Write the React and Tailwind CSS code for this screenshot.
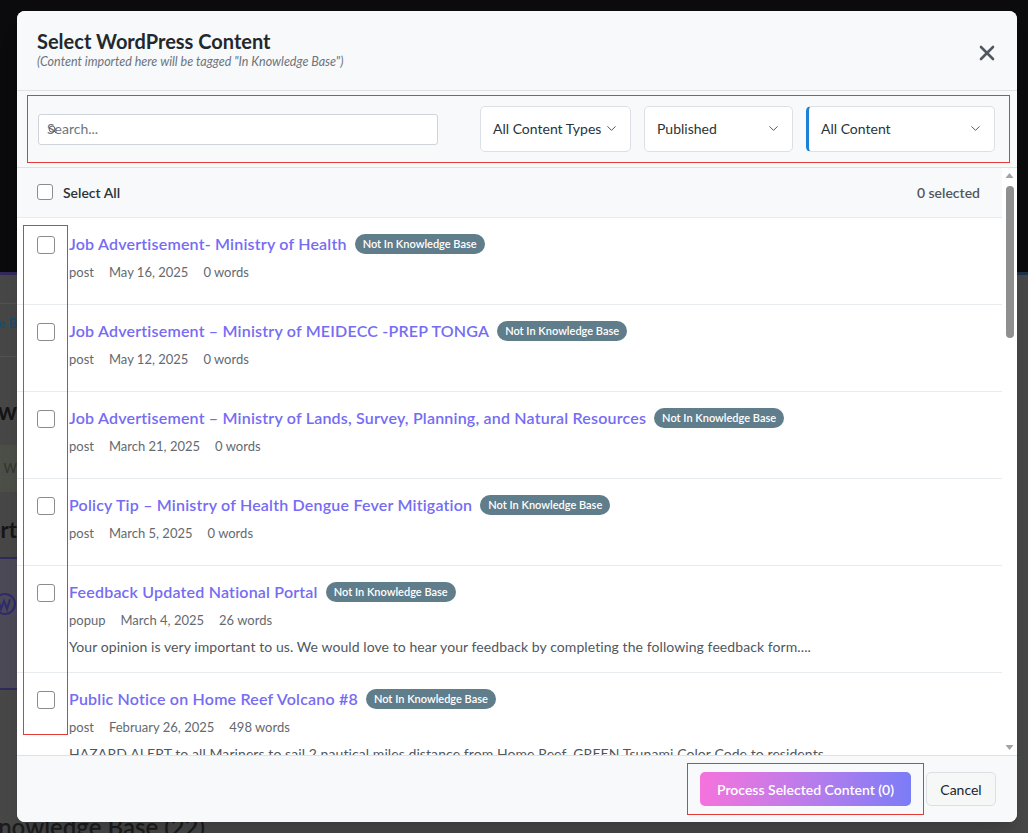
import { X, ChevronDown, Search } from "lucide-react";

const items = [
  { title: "Job Advertisement- Ministry of Health", type: "post", date: "May 16, 2025", words: "0 words" },
  { title: "Job Advertisement – Ministry of MEIDECC -PREP TONGA", type: "post", date: "May 12, 2025", words: "0 words" },
  {
    title: "Job Advertisement – Ministry of Lands, Survey, Planning, and Natural Resources",
    type: "post",
    date: "March 21, 2025",
    words: "0 words",
  },
  { title: "Policy Tip – Ministry of Health Dengue Fever Mitigation", type: "post", date: "March 5, 2025", words: "0 words" },
  {
    title: "Feedback Updated National Portal",
    type: "popup",
    date: "March 4, 2025",
    words: "26 words",
    excerpt:
      "Your opinion is very important to us. We would love to hear your feedback by completing the following feedback form....",
  },
  {
    title: "Public Notice on Home Reef Volcano #8",
    type: "post",
    date: "February 26, 2025",
    words: "498 words",
    excerpt:
      "HAZARD ALERT to all Mariners to sail 2 nautical miles distance from Home Reef. GREEN Tsunami Color Code to residents...",
  },
  { title: "Public Notice on Home Reef Volcano #7", type: "post", date: "February 20, 2025", words: "412 words" },
];

// left strip of the page behind the dialog (only the tail of the text shows)
const Strip = ({ className = "", cell = "", children }) => (
  <div className={`flex ${className}`}>
    <div className={`flex w-[17px] justify-end overflow-hidden ${cell}`}>
      {children && <span className="whitespace-nowrap">{children}</span>}
    </div>
  </div>
);

const Backdrop = () => (
  <div className="absolute inset-0 flex flex-col bg-[#474747]">
    <div className="h-[272px] bg-[#0b0b0e]" />
    <div className="flex h-[3px] bg-[#1c3249]">
      <div className="w-[17px] bg-[#33295a]" />
    </div>
    <Strip className="h-[29px]" cell="border-b border-[#525252]" />
    <Strip className="h-[53px]" cell="border-b border-[#525252] pt-[10px] text-[13px] font-bold text-[#1d4d68]">
      Knowledge B
    </Strip>
    <Strip className="h-[88px]" cell="items-start pt-[41px] text-[24px] font-bold leading-[26px] text-[#151515]">
      Now
    </Strip>
    <Strip className="h-[47px]" cell="items-center bg-[#4b4f47] text-[13px] text-[#2f372e]">
      W
    </Strip>
    <Strip className="h-[65px]" cell="items-start pt-[25px] text-[22px] font-bold leading-[26px] text-[#161616]">
      Import
    </Strip>
    <div className="flex h-[133px]">
      <div className="w-[17px] border-y-2 border-[#2e2a5c] bg-[#4b4a56] pt-[33px]">
        <svg width="17" height="24" viewBox="0 0 17 24">
          <circle cx="5" cy="12" r="10" fill="none" stroke="#2f2b6c" strokeWidth="2" />
          <path d="M-2 7 L1 17 L4 9 L7 17 L10 7" fill="none" stroke="#2f2b6c" strokeWidth="2" />
        </svg>
      </div>
    </div>
    <div className="flex-1" />
    <div className="flex h-[19px] overflow-hidden">
      <div className="flex w-[205px] justify-end overflow-hidden">
        <span className="whitespace-nowrap text-[24px] font-semibold leading-[26px] text-[#1c1c1c]">
          Knowledge Base (22)
        </span>
      </div>
    </div>
  </div>
);

const Checkbox = ({ size = "h-[18px] w-[18px]" }) => (
  <span className={`block ${size} shrink-0 rounded-[3px] border-[1.5px] border-[#8c8c8c] bg-white`} />
);

const Select = ({ label, width, accent }) => (
  <div
    className={`flex h-[46px] ${width} items-center justify-between rounded-[5px] border border-[#dcdfe3] bg-white pb-[1px] pr-[11px] text-[14px] text-[#2c3338] ${
      accent ? "border-l-[3px] border-l-[#1d7fd6] pl-[12px]" : "pl-[12px]"
    }`}
  >
    <span className="whitespace-nowrap">{label}</span>
    <ChevronDown size={15} strokeWidth={1.6} className="text-[#50575e]" />
  </div>
);

const Item = ({ item }) => (
  <div className="flex border-b border-[#e9ecef] bg-white px-5 pb-[15px] pt-[15px]">
    <div className="pt-[3px]">
      <Checkbox />
    </div>
    <div className="ml-[14px] min-w-0">
      <div className="flex h-[22px] items-center gap-2 whitespace-nowrap">
        <span className="text-[16px] font-semibold tracking-[0.2px] text-[#756cf3]">{item.title}</span>
        <span className="flex h-5 items-center rounded-full bg-[#607d8b] px-2 text-[11px] font-semibold text-white">
          Not In Knowledge Base
        </span>
      </div>
      <div className="mb-[6px] mt-[8px] flex h-5 items-center gap-[15px] text-[13px] text-[#646970]">
        <span>{item.type}</span>
        <span>{item.date}</span>
        <span>{item.words}</span>
      </div>
      {item.excerpt && (
        <p className="mt-[5px] h-5 whitespace-nowrap text-[14px] leading-5 tracking-[0.08px] text-[#50575e]">
          {item.excerpt}
        </p>
      )}
    </div>
  </div>
);

export default function App() {
  return (
    <div className="relative h-screen w-full overflow-hidden font-[Lato,sans-serif]">
      <Backdrop />

      {/* Dialog */}
      <div className="absolute left-[17px] top-[11px] flex h-[811px] w-[1000px] flex-col overflow-hidden rounded-lg bg-white shadow-xl">
        {/* Header */}
        <div className="flex h-[80px] items-start justify-between border-b border-[#dee2e6] bg-[#f8f9fa] pl-5 pr-[18px] pt-[18px]">
          <div>
            <h2 className="text-[20px] font-bold leading-6 text-[#23282d]">Select WordPress Content</h2>
            <p className="mt-[1px] text-[12.5px] italic leading-4 text-[#6c757d]">
              (Content imported here will be tagged "In Knowledge Base")
            </p>
          </div>
          <button className="mt-[12px] text-[#50575e]">
            <X size={24} strokeWidth={2.6} />
          </button>
        </div>

        {/* Filters */}
        <div className="h-[77px] border-b border-[#dee2e6] bg-[#f8f9fa] py-[4px] pl-[10px] pr-[7px]">
          <div className="flex h-full items-center justify-between border border-[#e53935] pl-[10px] pr-[14px]">
            <div className="relative flex h-[31px] w-[400px] items-center rounded-[3px] border border-[#ced4da] bg-white pb-[1px] pl-[8px] text-[14px] text-[#6c757d]">
              <Search size={9} strokeWidth={2.5} className="absolute left-[9px] top-[10px] text-[#50575e]" />
              Search...
            </div>
            <div className="flex gap-[13px]">
              <Select label="All Content Types" width="w-[151px]" />
              <Select label="Published" width="w-[149px]" />
              <Select label="All Content" width="w-[189px]" accent />
            </div>
          </div>
        </div>

        {/* List */}
        <div className="relative flex h-[588px] border-b border-[#dee2e6]">
          <div className="flex-1 overflow-hidden">
            <div className="flex h-[50px] items-center justify-between border-b border-[#e9ecef] bg-[#f8f9fa] pb-[1px] pl-5 pr-[22px]">
              <div className="flex items-center gap-[10px]">
                <Checkbox size="h-4 w-4" />
                <span className="text-[14px] font-semibold text-[#2c3338]">Select All</span>
              </div>
              <span className="text-[14px] font-semibold text-[#50575e]">0 selected</span>
            </div>
            {items.map((item) => (
              <Item key={item.title} item={item} />
            ))}
          </div>

          {/* scrollbar */}
          <div className="flex w-[15px] flex-col items-center bg-white">
            <svg width="15" height="15" viewBox="0 0 15 15">
              <path d="M3.5 10 L7.5 5 L11.5 10 Z" fill="#a3a3a3" />
            </svg>
            <div className="mt-[3px] h-[152px] w-[8px] rounded-full bg-[#8f8f8f]" />
            <div className="flex-1" />
            <svg width="15" height="15" viewBox="0 0 15 15">
              <path d="M3.5 5 L7.5 10 L11.5 5 Z" fill="#a3a3a3" />
            </svg>
          </div>

          {/* annotation around the checkboxes */}
          <div className="pointer-events-none absolute left-[6px] top-[57px] h-[510px] w-[45px] border border-[#e53935]" />
        </div>

        {/* Footer */}
        <div className="flex flex-1 items-center justify-end bg-[#f8f9fa] pr-[21px]">
          <div className="border border-[#e53935] px-[12px] py-[8px]">
            <button className="flex h-[34px] w-[211px] items-center justify-center rounded-[5px] bg-linear-to-r from-[#f572dc] to-[#7b7cf7] text-[14px] font-semibold text-white">
              Process Selected Content (0)
            </button>
          </div>
          <button className="ml-[2px] h-[34px] w-[70px] rounded-[5px] border border-[#dcdfe3] bg-[#f6f7f7] text-[14px] text-[#1d2327]">
            Cancel
          </button>
        </div>
      </div>
    </div>
  );
}
